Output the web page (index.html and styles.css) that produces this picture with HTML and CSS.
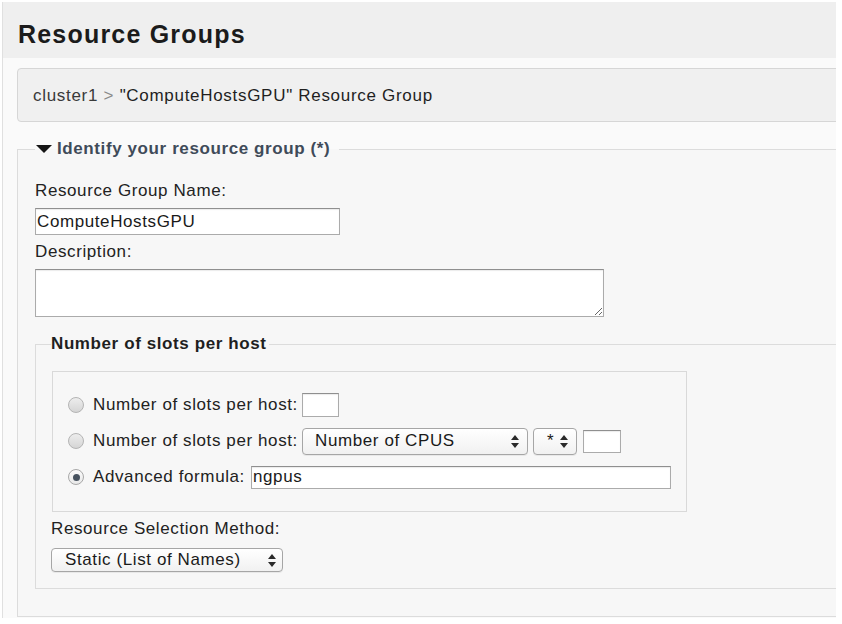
FILE: index.html
```html
<!DOCTYPE html>
<html>
<head>
<meta charset="utf-8">
<title>Resource Groups</title>
<link rel="stylesheet" href="styles.css">
</head>
<body>
<div class="page">
  <div class="header"><h1 class="title">Resource Groups</h1></div>
  <div class="content">
    <div class="crumb"><span class="crumb-root">cluster1</span> <span class="crumb-sep">&gt;</span> "ComputeHostsGPU" Resource Group</div>
    <fieldset class="fs-main">
      <legend class="legend-main"><svg class="tri" width="16" height="8" viewBox="0 0 16 8"><path d="M0 0H16L8 8Z" fill="#151515"/></svg><span>Identify your resource group (*)</span></legend>
      <div class="label label-name">Resource Group Name:</div>
      <input class="text name-input" type="text" value="ComputeHostsGPU">
      <div class="label label-desc">Description:</div>
      <textarea class="desc"></textarea>
      <fieldset class="fs-slots">
        <legend class="legend-slots">Number of slots per host</legend>
        <div class="slots-box">
          <div class="row">
            <span class="radio"></span>
            <span class="row-label">Number of slots per host:</span>
            <input class="text small-input" type="text">
          </div>
          <div class="row">
            <span class="radio"></span>
            <span class="row-label">Number of slots per host:</span>
            <div class="select cpu-select"><span>Number of CPUS</span><svg class="arrows" width="8" height="13" viewBox="0 0 8 13"><path d="M0 5L4 0L8 5Z M0 8L4 13L8 8Z" fill="#2a2a2a"/></svg></div>
            <div class="select op-select"><span>*</span><svg class="arrows" width="8" height="13" viewBox="0 0 8 13"><path d="M0 5L4 0L8 5Z M0 8L4 13L8 8Z" fill="#2a2a2a"/></svg></div>
            <input class="text tail-input" type="text">
          </div>
          <div class="row">
            <span class="radio checked"></span>
            <span class="row-label formula-label">Advanced formula:</span>
            <input class="text formula-input" type="text" value="ngpus">
          </div>
        </div>
        <div class="label method-label">Resource Selection Method:</div>
        <div class="select static-select"><span>Static (List of Names)</span><svg class="arrows" width="8" height="13" viewBox="0 0 8 13"><path d="M0 5L4 0L8 5Z M0 8L4 13L8 8Z" fill="#2a2a2a"/></svg></div>
      </fieldset>
    </fieldset>
  </div>
</div>
</body>
</html>
```

FILE: styles.css
```css
* { box-sizing: border-box; }

body {
  margin: 0;
  background: #ffffff;
  font-family: "Liberation Sans", Arial, Helvetica, sans-serif;
  color: #222222;
}

.page {
  margin: 2px 0 0 2px;
  width: 834px;
  height: 616px;
  border-left: 1px solid #e0e0e0;
  background: #fafafa;
  overflow: hidden;
}

.header {
  height: 56px;
  background: #efefef;
  padding: 17px 0 0 15px;
}

.title {
  margin: 0;
  font-size: 25px;
  line-height: 30px;
  font-weight: bold;
  letter-spacing: 1.2px;
  color: #1b1b1b;
}

.content {
  padding: 10px 0 0 14px;
}

.crumb {
  height: 54px;
  margin-right: -10px;
  border: 1px solid #d6d6d6;
  border-radius: 4px;
  background: #f0f0f0;
  padding: 2px 0 0 15px;
  font-size: 17px;
  line-height: 50px;
  letter-spacing: 0.7px;
  color: #1f1f1f;
  white-space: nowrap;
}

.crumb-root { color: #3a3a3a; }
.crumb-sep { color: #8a8a8a; }

.fs-main {
  margin: 17px -20px 0 0;
  min-width: 0;
  border: 1px solid #dcdcdc;
  padding: 0 0 27px 17px;
  background: #f7f7f7;
}

.legend-main {
  display: flex;
  align-items: center;
  padding: 0 9px 0 1px;
  font-size: 17px;
  line-height: 20px;
  font-weight: bold;
  letter-spacing: 0.6px;
  color: #3f4b59;
}

.tri { flex: none; margin-right: 5px; }

.label {
  font-size: 17px;
  line-height: 20px;
  letter-spacing: 0.6px;
  color: #222222;
  white-space: nowrap;
}

.label-name { margin-top: 22px; }
.label-desc { margin-top: 7px; }

.text {
  display: block;
  font-family: "Liberation Sans", Arial, Helvetica, sans-serif;
  font-size: 17px;
  letter-spacing: 0.6px;
  color: #1a1a1a;
  background: #ffffff;
  border: 1px solid #ababab;
  border-top-color: #8f8f8f;
  border-radius: 0;
  box-shadow: inset 0 1px 1px rgba(0, 0, 0, 0.08);
  outline: none;
  margin: 0;
}

.name-input {
  width: 305px;
  height: 27px;
  margin-top: 7px;
  padding: 0 2px 0 1px;
}

.desc {
  display: block;
  width: 569px;
  height: 48px;
  margin: 7px 0 0 0;
  border: 1px solid #ababab;
  border-top-color: #8f8f8f;
  box-shadow: inset 0 1px 1px rgba(0, 0, 0, 0.08);
  background: #ffffff;
  resize: both;
  font-family: "Liberation Sans", Arial, sans-serif;
  font-size: 15px;
}

.fs-slots {
  margin: 16px -20px 0 0;
  min-width: 0;
  border: 1px solid #dcdcdc;
  padding: 0 0 16px 16px;
}

.legend-slots {
  margin-left: -1px;
  padding: 0 2px 0 0;
  font-size: 17px;
  line-height: 22px;
  font-weight: bold;
  letter-spacing: 0.6px;
  color: #1f1f1f;
}

.slots-box {
  margin-top: 16px;
  width: 635px;
  border: 1px solid #d9d9d9;
  padding: 15px 0 16px 15px;
}

.row {
  display: flex;
  align-items: center;
  height: 36px;
}

.radio {
  flex: none;
  width: 16px;
  height: 16px;
  margin-right: 9px;
  border-radius: 50%;
  border: 1px solid #b4b4b4;
  background: linear-gradient(#ededed, #d5d5d5);
}

.radio.checked {
  display: flex;
  align-items: center;
  justify-content: center;
  background: linear-gradient(#fbfbfb, #e9e9e9);
  border-color: #a8a8a8;
}

.radio.checked::after {
  content: "";
  width: 7px;
  height: 7px;
  border-radius: 50%;
  background: #47525f;
}

.row-label {
  flex: none;
  width: 209px;
  font-size: 17px;
  line-height: 20px;
  letter-spacing: 0.6px;
  white-space: nowrap;
}

.row-label.formula-label { width: 158px; }

.small-input {
  width: 37px;
  height: 24px;
}

.tail-input {
  width: 38px;
  height: 23px;
  margin-left: 6px;
}

.formula-input {
  width: 420px;
  height: 23px;
  padding: 0 2px 0 1px;
}

.select {
  flex: none;
  display: flex;
  align-items: center;
  justify-content: space-between;
  border: 1px solid #a6a6a6;
  border-radius: 4px;
  background: linear-gradient(#ffffff, #f1f1f1);
  box-shadow: 0 1px 0 rgba(0, 0, 0, 0.06);
  font-size: 17px;
  letter-spacing: 0.6px;
  color: #1a1a1a;
  white-space: nowrap;
}

.arrows { flex: none; }

.cpu-select {
  width: 226px;
  height: 27px;
  padding: 0 8px 0 12px;
}

.op-select {
  width: 44px;
  height: 27px;
  margin-left: 5px;
  padding: 0 8px 0 13px;
}

.method-label {
  margin-top: 7px;
  margin-left: -1px;
}

.static-select {
  width: 232px;
  height: 24px;
  margin-top: 9px;
  margin-left: -1px;
  padding: 0 6px 0 13px;
}
```
